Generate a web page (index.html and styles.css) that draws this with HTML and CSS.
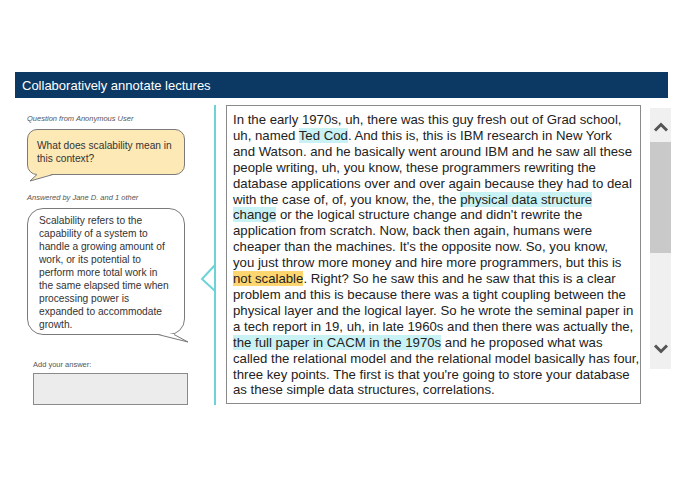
FILE: index.html
```html
<!DOCTYPE html>
<html lang="en">
<head>
<meta charset="utf-8">
<title>Collaboratively annotate lectures</title>
<link rel="stylesheet" href="styles.css">
</head>
<body>
<div class="page">
  <header class="banner">Collaboratively annotate lectures</header>
  <div class="main">
    <aside class="thread">
      <p class="meta">Question from Anonymous User</p>
      <div class="bubble question">What does scalability mean in<br>this context?<svg class="tail" width="40" height="10" viewBox="0 0 40 10"><polygon points="10,0 3,7 26,0" fill="#fce9b6"/><polyline points="26,0.5 3,7 10,0.5" fill="none" stroke="#777" stroke-width="1"/></svg></div>
      <p class="meta answered">Answered by Jane D. and 1 other</p>
      <div class="bubble answer">Scalability refers to the<br>capability of a system to<br>handle a growing amount of<br>work, or its potential to<br>perform more total work in<br>the same elapsed time when<br>processing power is<br>expanded to accommodate<br>growth.<svg class="tail" width="170" height="10" viewBox="0 0 170 10"><polygon points="131,0 161,8 147,0" fill="#fff"/><polyline points="131,0.5 161,8 147,0.5" fill="none" stroke="#777" stroke-width="1"/></svg></div>
      <p class="meta add">Add your answer:</p>
      <div class="input"></div>
      <svg class="pointer" width="20" height="32" viewBox="0 0 20 32"><polyline points="17,3 4,17 17,29" fill="none" stroke="#6dd3d8" stroke-width="2"/></svg>
    </aside>
    <div class="transcript">In the early 1970s, uh, there was this guy fresh out of Grad school,<br>uh, named <span class="hl-teal">Ted Cod</span>. And this is, this is IBM research in New York<br>and Watson. and he basically went around IBM and he saw all these<br>people writing, uh, you know, these programmers rewriting the<br>database applications over and over again because they had to deal<br>with the case of, of, you know, the, the <span class="hl-teal">physical data structure<br>change</span> or the logical structure change and didn't rewrite the<br>application from scratch. Now, back then again, humans were<br>cheaper than the machines. It's the opposite now. So, you know,<br>you just throw more money and hire more programmers, but this is<br><span class="hl-yellow">not scalable</span>. Right? So he saw this and he saw that this is a clear<br>problem and this is because there was a tight coupling between the<br>physical layer and the logical layer. So he wrote the seminal paper in<br>a tech report in 19, uh, in late 1960s and then there was actually the,<br><span class="hl-teal">the full paper in CACM in the 1970s</span> and he proposed what was<br>called the relational model and the relational model basically has four,<br>three key points. The first is that you're going to store your database<br>as these simple data structures, correlations.</div>
    <div class="scrollbar">
      <div class="sb-btn sb-up"><svg width="16" height="10" viewBox="0 0 16 10"><polyline points="2,8.5 8,2.5 14,8.5" fill="none" stroke="#555" stroke-width="3"/></svg></div>
      <div class="sb-thumb"></div>
      <div class="sb-rest"></div>
      <div class="sb-btn sb-down"><svg width="16" height="10" viewBox="0 0 16 10"><polyline points="2,1.5 8,7.5 14,1.5" fill="none" stroke="#555" stroke-width="3"/></svg></div>
    </div>
  </div>
</div>
</body>
</html>
```

FILE: styles.css
```css
html, body {
  margin: 0;
  padding: 0;
  background: #ffffff;
}

body {
  font-family: "Liberation Sans", Arial, Helvetica, sans-serif;
  color: #222;
}

.page {
  padding: 72px 0 0 15px;
}

.banner {
  width: 653px;
  height: 26px;
  box-sizing: border-box;
  padding-left: 7px;
  background: #0c3963;
  color: #ffffff;
  font-size: 13px;
  line-height: 27px;
}

.main {
  display: flex;
  align-items: flex-start;
  margin-top: 7px;
}

.thread {
  position: relative;
  width: 201px;
  box-sizing: border-box;
  padding-left: 12px;
  border-right: 2px solid #6dd3d8;
}

.meta {
  margin: 0;
  font-size: 7.5px;
  line-height: 10px;
  font-style: italic;
  color: #555;
}

.thread > .meta:first-child {
  margin-top: 9px;
}

.bubble {
  position: relative;
  width: 158px;
  box-sizing: border-box;
  border: 1px solid #7a7a7a;
  font-size: 10.2px;
  line-height: 13px;
  color: #333;
  margin-top: 5px;
}

.question {
  background: #fce9b6;
  border-radius: 10px;
  padding: 9px 6px 9px 9px;
}

.answer {
  background: #ffffff;
  border-radius: 16px;
  padding: 5px 6px 3px 11px;
}

.tail {
  position: absolute;
  left: -1px;
  top: 100%;
  overflow: visible;
}

.answered {
  margin-top: 18px;
}

.add {
  margin-top: 25px;
  margin-left: 6px;
  font-style: normal;
}

.input {
  width: 155px;
  height: 32px;
  box-sizing: border-box;
  margin-top: 3px;
  margin-left: 6px;
  border: 1px solid #8a8a8a;
  background: #ececec;
}

.pointer {
  position: absolute;
  left: 183px;
  top: 157px;
}

.transcript {
  margin-left: 10px;
  width: 415px;
  height: 299px;
  box-sizing: border-box;
  border: 1px solid #8a8a8a;
  padding: 6px 4px 0 6px;
  font-size: 13.2px;
  line-height: 15.9px;
  color: #222;
  white-space: nowrap;
  overflow: hidden;
}

.hl-teal {
  background: #c9f2f4;
}

.hl-yellow {
  background: #fdd670;
}

.scrollbar {
  margin-left: 9px;
  margin-top: 3px;
  width: 21px;
  height: 261px;
  background: #f0f0f0;
  display: flex;
  flex-direction: column;
}

.sb-btn {
  height: 34px;
  display: flex;
  align-items: center;
  justify-content: center;
}

.sb-btn svg {
  display: block;
}

.sb-up {
  padding-top: 3px;
  box-sizing: border-box;
}

.sb-down {
  padding-bottom: 6px;
  box-sizing: border-box;
}

.sb-thumb {
  height: 111px;
  background: #c9c9c9;
}

.sb-rest {
  flex: 1;
}
```
